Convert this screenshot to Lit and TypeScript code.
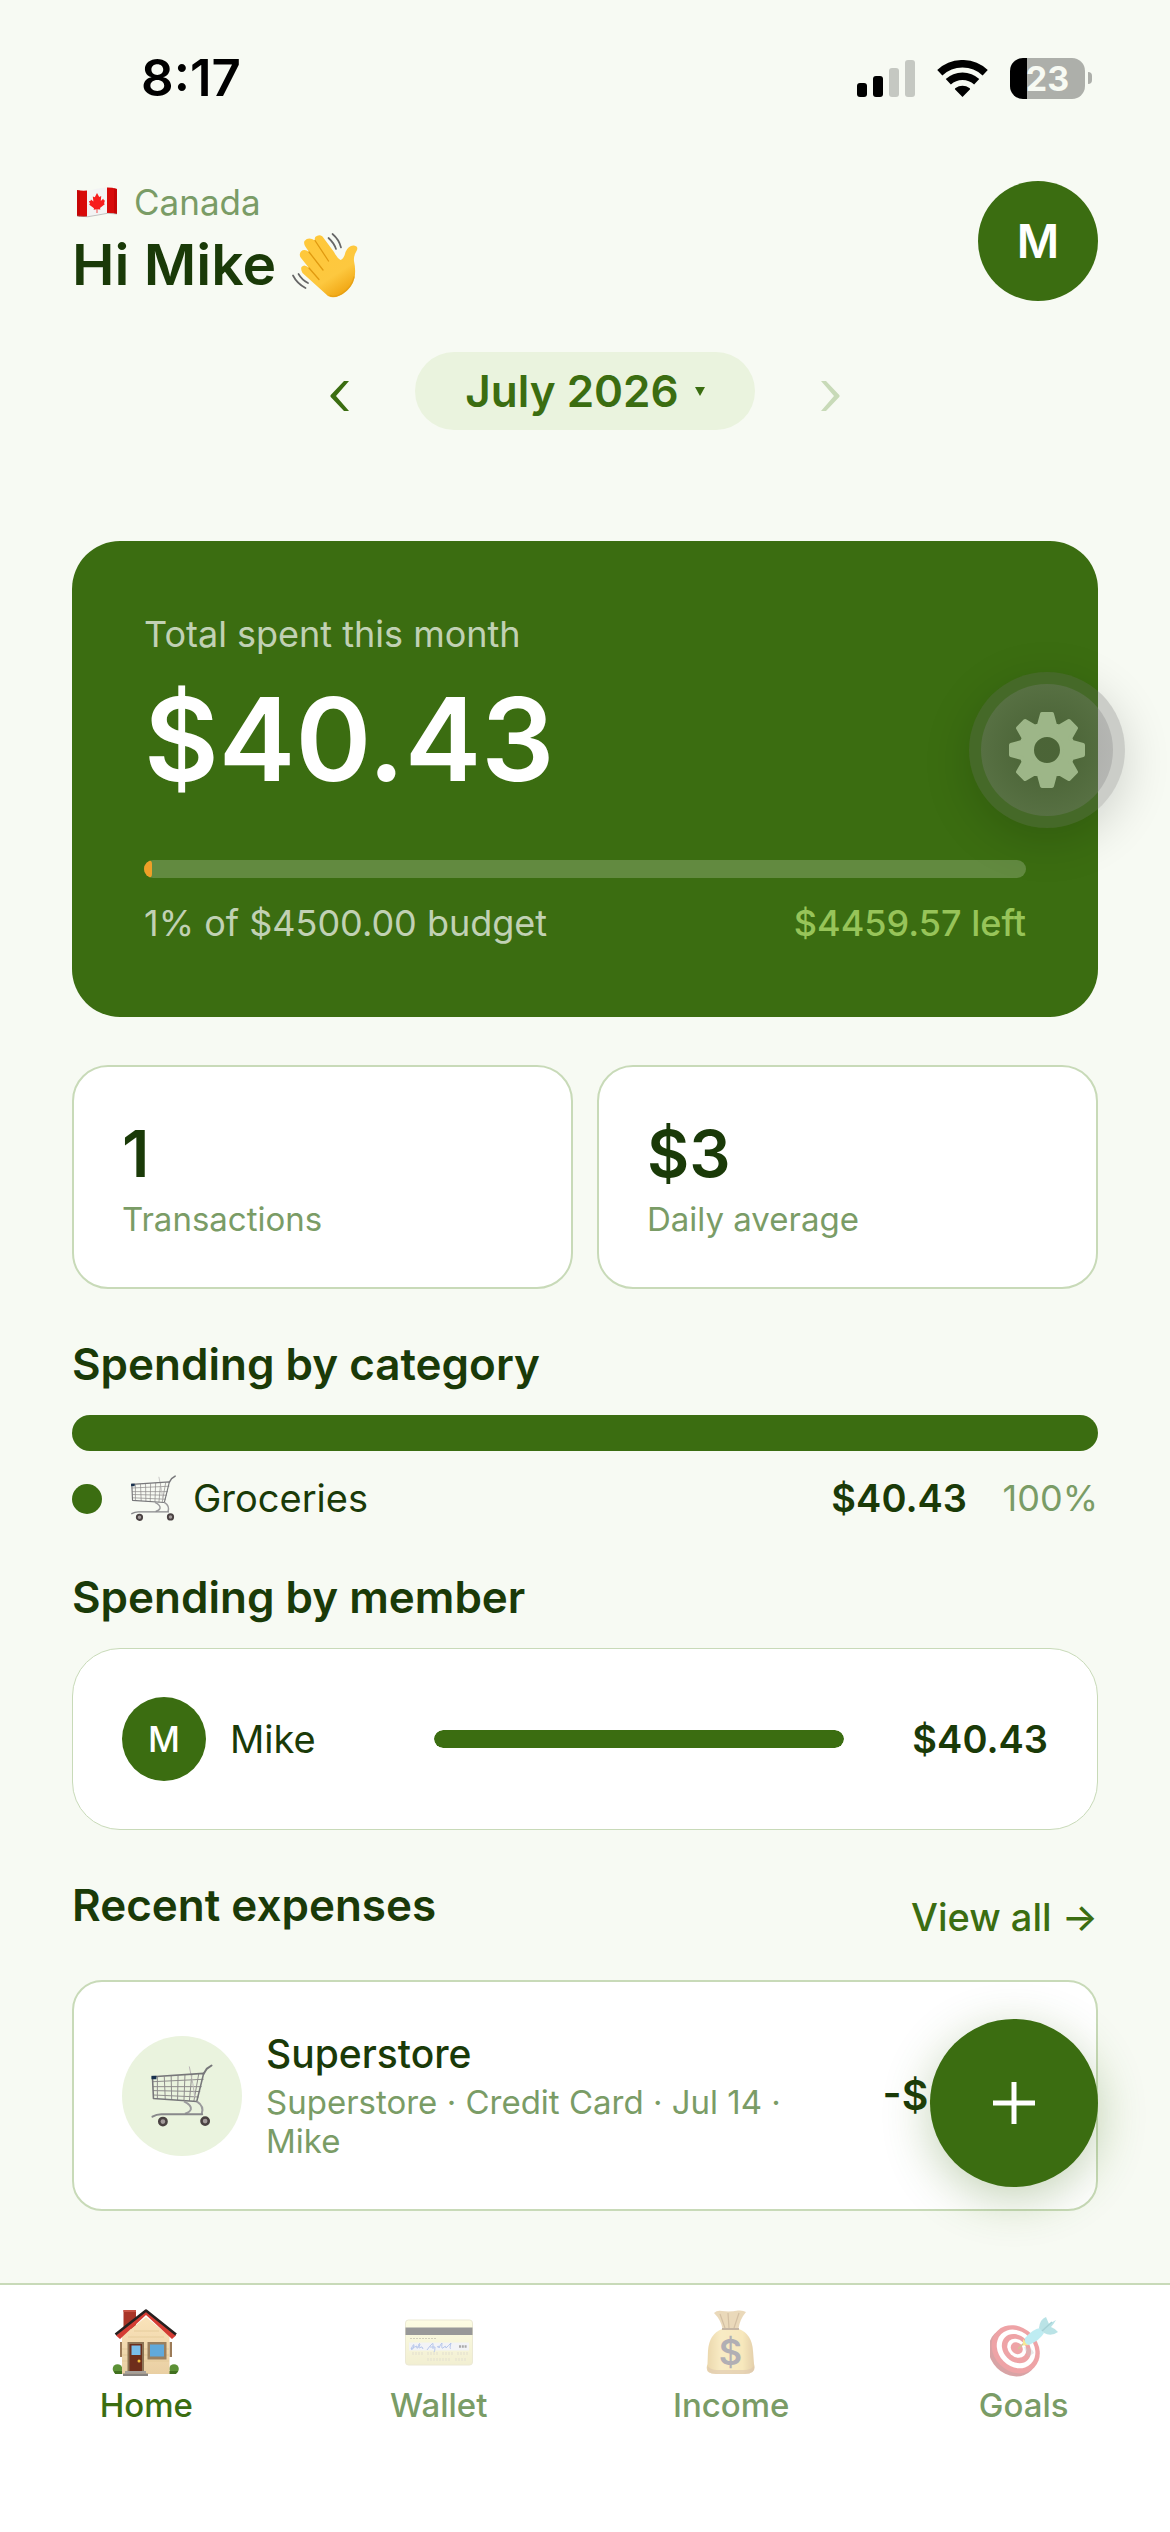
import { LitElement, html, css, svg } from "lit";
import { customElement, property } from "lit/decorators.js";
import { classMap } from "lit/directives/class-map.js";
import { styleMap } from "lit/directives/style-map.js";

// --- Types ---

interface Category {
  name: string;
  amount: number;
  percent: number;
}

interface Member {
  name: string;
  amount: number;
  share: number;
}

interface Expense {
  title: string;
  details: string[];
  amount: number;
}

// --- Data ---

const BUDGET = 4500;
const SPENT = 40.43;

const CATEGORIES: Category[] = [{ name: "Groceries", amount: 40.43, percent: 100 }];

const MEMBERS: Member[] = [{ name: "Mike", amount: 40.43, share: 100 }];

const EXPENSES: Expense[] = [
  { title: "Superstore", details: ["Superstore", "Credit Card", "Jul 14", "Mike"], amount: 40.43 },
];

// --- Pure helpers ---

function money(value: number, digits = 2): string {
  return `$${value.toFixed(digits)}`;
}

/** Outline of an eight-toothed gear around the origin. */
function gearPath(): string {
  const tooth = [
    [-8, -25],
    [-5, -36],
    [5, -36],
    [8, -25],
  ];
  const points: string[] = [];
  for (let i = 0; i < 8; i++) {
    const a = (i * Math.PI) / 4;
    for (const [x, y] of tooth) {
      const px = x * Math.cos(a) - y * Math.sin(a);
      const py = x * Math.sin(a) + y * Math.cos(a);
      points.push(`${px.toFixed(2)} ${py.toFixed(2)}`);
    }
  }
  return `M${points.join("L")}Z M15 0A15 15 0 1 0 -15 0A15 15 0 1 0 15 0Z`;
}

// --- Icons ---

const SIGNAL_ICON = html`<svg width="58" height="37" viewBox="0 0 58 37" aria-hidden="true">
  <rect x="0" y="23" width="10" height="14" rx="3" />
  <rect x="16" y="16" width="10" height="21" rx="3" />
  <rect x="32" y="8" width="10" height="29" rx="3" fill="#c5c8c2" />
  <rect x="48" y="0" width="10" height="37" rx="3" fill="#c5c8c2" />
</svg>`;

const WIFI_ICON = html`<svg width="51" height="37" viewBox="0 0 51 37" aria-hidden="true">
  <g fill="none" stroke="#000" stroke-width="7.5">
    <path d="M2.8 12.7A33.2 33.2 0 0 1 48.2 12.7" />
    <path d="M11.3 21.8A20.7 20.7 0 0 1 39.7 21.8" />
  </g>
  <path d="M25.5 37L17.9 29.2Q17.8 28.4 18.6 28A11.5 11.5 0 0 1 32.4 28Q33.2 28.4 33.1 29.2Z" />
</svg>`;

const FLAG_ICON = html`<svg width="42" height="32" viewBox="0 0 42 32" role="img" aria-label="Flag of Canada">
  <path d="M1 4Q11 6 20 3T41 3V28Q32 26 22 29T1 30Z" fill="#f3f3f3" />
  <path d="M1 4Q6 5 11 4.500V30.500Q6 31 1 30Z" fill="#d80a0a" />
  <path d="M31 1.600Q36 1.500 41 3V28Q36 26.500 31 27Z" fill="#d80a0a" />
  <path d="M1 4Q2.500 4.500 4 4.500V30.600L1 30Z M38 2L41 3V28L38 27.200Z" fill="#b30000" opacity="0.5" />
  <path d="M1 30Q12 32 22 29T41 28" fill="none" stroke="#8a8a8a" stroke-width="0.800" opacity="0.600" />
  <path
    d="M21 7L23.200 11L25.200 10L24.800 15L27.200 12.800L28 14.400L29 14.200L28 17.400L29 18L24 22L24.400 23.600L21.400 23.200V27H20.600V23.200L17.600 23.800L18 22.200L13 18.600L14 18L13 15L14.400 15L15 13.400L17.400 15.400L16.800 10.400L18.800 11.200Z"
    fill="#f71c1c"
  />
</svg>`;

const WAVE_ICON = html`<svg width="66" height="66" viewBox="0 0 66 66" role="img" aria-label="Waving hand">
  <defs>
    <linearGradient id="skin" x1="0.2" y1="0" x2="0.8" y2="1">
      <stop offset="0" stop-color="#ffc83a" />
      <stop offset="0.65" stop-color="#fdc83f" />
      <stop offset="1" stop-color="#ee9f0a" />
    </linearGradient>
  </defs>
  <path
    d="M36 64Q42 67 50 62.500Q60 56 62.500 46Q64 38 62 29Q61.500 24 64.500 19Q67 14.500 62 13.500Q56.500 13 53.500 20Q52 27 48.500 28Q45 26 42 20L30.500 4.500Q27 1.800 23.500 4.800Q22.300 6.500 23 8.500L20 7Q15.500 5.500 12.500 9Q11.500 11 13 14L17 20Q12.500 16.500 9 19.500Q6.500 22.500 9 26L17 36Q12.500 31.500 9.500 35Q8.500 37.500 10.500 41Z"
    fill="url(#skin)"
  />
  <g fill="none" stroke="#e09a10" stroke-width="1.300" stroke-linecap="round">
    <path d="M23 8.500L36.500 29" />
    <path d="M17 20L31 38" />
    <path d="M17 36L27 47.500" />
    <path d="M38 63.500Q44 66 51 61Q60 55 62 45" opacity="0.600" />
  </g>
  <g fill="none" stroke="#666" stroke-width="1.700" stroke-linecap="round">
    <path d="M40.500 2Q47 7.500 49 15.500" />
    <path d="M36.500 6Q42 11 44 17" />
    <path d="M1 43.500Q5 51.500 13.500 56" />
    <path d="M6.500 42Q10 48 16 51" />
  </g>
</svg>`;

const CHEVRON_LEFT = html`<svg width="19" height="30" viewBox="0 0 19 30" fill="currentColor" aria-hidden="true">
  <path d="M14 0H19L6 15L19 30H14L0.500 15.800V14.200Z" />
</svg>`;

const CHEVRON_RIGHT = html`<svg width="19" height="30" viewBox="0 0 19 30" fill="currentColor" aria-hidden="true">
  <path d="M5 0H0L13 15L0 30H5L18.500 15.800V14.200Z" />
</svg>`;

const CARET_ICON = html`<svg width="10" height="9" viewBox="0 0 10 9" fill="currentColor" aria-hidden="true">
  <path d="M0 0H10L5 9Z" />
</svg>`;

const PLUS_ICON = html`<svg width="42" height="42" viewBox="0 0 42 42" fill="currentColor" aria-hidden="true">
  <path d="M18.500 0H23.500V18.500H42V23.500H23.500V42H18.500V23.500H0V18.500H18.500Z" />
</svg>`;

const GEAR_ICON = html`<svg width="78" height="78" viewBox="-39 -39 78 78" aria-hidden="true">
  <path
    d=${gearPath()}
    fill="#9db688"
    fill-rule="evenodd"
    stroke="#9db688"
    stroke-width="4"
    stroke-linejoin="round"
  />
</svg>`;

const cartIcon = (size: number) => html`<svg
  width=${size}
  height=${size}
  viewBox="-1 -1 64 65"
  role="img"
  aria-label="Shopping cart"
>
  <g fill="none" stroke="#8d8b8b" stroke-width="1">
    <path d="M6 12V34M13 11.600L14 35M20 11L20.500 35.500M27 10.600L26.500 35.800M34 10L33 36M41 9.500L38.500 36.500M48 9L43 37" />
    <path d="M1 17L53 14.500M1.500 22H51M1.500 26L49.500 27M2 30.500L48 32.500" />
    <path d="M38.400 1.500L42 19L44 33" stroke="#b9b5b5" />
  </g>
  <g fill="none" stroke="#77777a" stroke-width="1.600" stroke-linejoin="round">
    <path d="M1 12L53 8.500L46 37L2 34Z" />
    <path d="M53 9L56 4L61 0.500" stroke-width="2" stroke-linecap="round" />
  </g>
  <path d="M33 37Q41 41 40 45Q39 48 34 49.500M46 37Q54 42 51 50" fill="none" stroke="#9a9a9c" stroke-width="2" />
  <path d="M1 52.500Q5 50 10 50H51.500" fill="none" stroke="#88888b" stroke-width="2" stroke-linecap="round" />
  <path d="M0 11H5V14.500H0Z" fill="#17304d" />
  <g fill="#a39b9b" stroke="#4a4242" stroke-width="2.600">
    <circle cx="11.600" cy="57.500" r="3.700" />
    <circle cx="54.500" cy="57" r="3.700" />
  </g>
</svg>`;

const HOME_ICON = svg`
  <defs>
    <linearGradient id="wall" x1="0" y1="0" x2="0" y2="1">
      <stop offset="0" stop-color="#fae3ba" />
      <stop offset="1" stop-color="#e9cfa3" />
    </linearGradient>
  </defs>
  <circle cx="5.500" cy="60" r="4.800" fill="#5c9136" />
  <circle cx="62" cy="60" r="4.800" fill="#5c9136" />
  <path d="M2 62H10V65H3ZM57 62H66L64 65H57Z" fill="#41701f" />
  <path d="M11.500 1H24V20H11.500Z" fill="#a93527" />
  <path d="M11.500 1H24V3H11.500Z" fill="#c85243" />
  <path d="M8 33H10V48H8ZM57.500 33H60V48H57.500Z" fill="#9c7b58" />
  <path d="M34 8L57.500 27V65H10V27Z" fill="url(#wall)" />
  <path d="M10 40H57M10 46H57M10 52H57M22 22H47M16 28H52" stroke="#e0c594" stroke-width="0.700" />
  <path d="M34 6L60 30L64 26.500L34 1L4 26.500L8 30Z" fill="#d43c33" />
  <path d="M3.500 25.500L34 1.500L64 25.500" fill="none" stroke="#26201f" stroke-width="2.600" stroke-linejoin="round" />
  <path d="M15.500 33H32V62.500H15.500Z" fill="#8c7355" />
  <path d="M17.500 35H30V62.500H17.500Z" fill="#6e2e1b" />
  <path d="M19.500 36.500H28.500V46H19.500Z" fill="#79bde9" />
  <circle cx="27" cy="52" r="1.500" fill="#f2c03c" />
  <path d="M35.500 33H54.500V50.500H35.500Z" fill="#9a7f5e" />
  <path d="M38 35.500H52V47.500H38Z" fill="#61a9da" />
  <path d="M13 62H34V64.500H13Z" fill="#a5a09b" />
  <path d="M11 64.500H36V67H11Z" fill="#85817e" />`;

const WALLET_ICON = svg`
  <defs>
    <linearGradient id="plastic" x1="0" y1="0" x2="0" y2="1">
      <stop offset="0" stop-color="#fbfbc8" />
      <stop offset="1" stop-color="#e6e0a6" />
    </linearGradient>
  </defs>
  <rect x="0.500" y="11" width="67" height="45" rx="3" fill="url(#plastic)" stroke="#d9d4ad" />
  <path d="M0.500 18.500H67.500V26H0.500Z" fill="#333" />
  <path d="M5 29.500H32" stroke="#a8a47e" stroke-width="1.200" stroke-dasharray="2 1" />
  <path d="M4 33.500H64V41.500H4Z" fill="#e6e9ef" />
  <path
    d="M6 40Q9 34 9 36Q8 42 6 40Q9 38 12 37Q11 40 13 39Q14 33 15 35Q13 41 16 38Q17 37 18 40M22 41Q27 34 28 34.500L28 40M25 38H30Q30 42 29 43M32 38Q34 36 34 39Q36 34 37 34Q36 42 39 38Q41 36 41 39Q44 36 46 34Q44 41 46 39"
    fill="none" stroke="#6f8fd8" stroke-width="1"
  />
  <path d="M54 37.500H62" stroke="#555" stroke-width="2.400" stroke-dasharray="2 0.800" />
  <path d="M7 44.500H18M22 44.500H33M37 44.500H48M52 44.500H63M22 50.500H46M50 50.500H62" stroke="#d8d2a6" stroke-width="3" stroke-dasharray="2 1" />`;

const INCOME_ICON = svg`
  <defs>
    <linearGradient id="sack" x1="0" y1="0" x2="1" y2="0">
      <stop offset="0" stop-color="#d8b05c" />
      <stop offset="0.300" stop-color="#f3d98b" />
      <stop offset="0.750" stop-color="#f0d27c" />
      <stop offset="1" stop-color="#c99f58" />
    </linearGradient>
  </defs>
  <path d="M17 4Q20 1 25 2Q33 3 41 1.500Q46 1 49 3Q43 10 41.500 19.500H25.500Q24 11 17 4Z" fill="#d7b478" />
  <path d="M23 5L28 19M31 4L32 19M42 4L37 19" stroke="#a9824a" stroke-width="1.200" />
  <path d="M25 20H42Q55 25 56 42L57 55Q60 65 48 65H19Q7 65 10.500 55L11 42Q12 25 25 20Z" fill="url(#sack)" />
  <path d="M10.500 57Q14 61 20 61H47Q54 61 57 57Q58 65 48 65H19Q9 65 10.500 57Z" fill="#bd9060" opacity="0.600" />
  <path d="M25 20H42" stroke="#8e7049" stroke-width="2" />
  <text x="33.500" y="56" text-anchor="middle" font-family="Inter, sans-serif" font-size="36" font-weight="600" fill="#66616c">$</text>`;

const GOALS_ICON = svg`
  <g transform="rotate(45 25 41)">
    <ellipse cx="25" cy="44" rx="26" ry="22.500" fill="#b34a4d" />
    <ellipse cx="25" cy="40" rx="26" ry="22" fill="#de4a50" />
    <ellipse cx="25" cy="39.500" rx="21" ry="17.500" fill="#fff" />
    <ellipse cx="25" cy="39" rx="16" ry="13" fill="#de4a50" />
    <ellipse cx="25" cy="38.500" rx="10.500" ry="8.500" fill="#fff" />
    <ellipse cx="25" cy="38.500" rx="6.500" ry="5.500" fill="#de4a50" />
  </g>
  <path d="M34 38Q42 38 44 44L38 48Z" fill="#888" opacity="0.350" />
  <path d="M28 40L35 33" stroke="#a28c2b" stroke-width="1.500" />
  <path d="M33 30L39 36L33 36.500Z" fill="#f0d12e" />
  <path d="M35 29Q43 20 50 19L54 24Q50 31 39 36Q34 35 35 29Z" fill="#7fdbe6" />
  <path d="M49 19Q50 10 56 8L59 15L66 11Q63 16 61 18Q66 20 68 23Q61 28 54 24Z" fill="#78c8cf" />
  <path d="M52 22L62 13" stroke="#4ea5ae" stroke-width="1.500" />`;

const NAV_ITEMS = [
  { label: "Home", icon: HOME_ICON, active: true },
  { label: "Wallet", icon: WALLET_ICON, active: false },
  { label: "Income", icon: INCOME_ICON, active: false },
  { label: "Goals", icon: GOALS_ICON, active: false },
];

// --- Components ---

/** Phone status bar with the clock, signal, wifi and battery. */
@customElement("status-bar")
export class StatusBarElement extends LitElement {
  static styles = css`
    :host {
      display: flex;
      justify-content: space-between;
      align-items: center;
      height: 141px;
      box-sizing: border-box;
      padding: 15px 78px 0 141px;
      color: #000;
    }

    .time {
      font-size: 51px;
      font-weight: 600;
      line-height: 60px;
    }

    .icons {
      display: flex;
      align-items: center;
      gap: 22px;
    }

    .battery {
      display: flex;
      align-items: center;
      gap: 3px;
    }

    .level {
      width: 75px;
      border-radius: 13px;
      color: #f7faf3;
      font-size: 34px;
      font-weight: 700;
      line-height: 41px;
      text-align: center;
    }

    .tip {
      width: 4px;
      height: 12px;
      border-radius: 0 6px 6px 0;
      background: #adafaa;
    }

    svg {
      display: block;
    }
  `;

  @property() time = "8:17";
  @property({ type: Number }) battery = 23;

  render() {
    const fill = `linear-gradient(to right, #000 ${this.battery}%, #adafaa ${this.battery}%)`;
    return html`
      <span class="time">${this.time}</span>
      <div class="icons">
        ${SIGNAL_ICON} ${WIFI_ICON}
        <div class="battery">
          <span class="level" style=${styleMap({ background: fill })}>${this.battery}</span>
          <span class="tip"></span>
        </div>
      </div>
    `;
  }
}

/** Bottom tab bar. */
@customElement("tab-bar")
export class TabBarElement extends LitElement {
  static styles = css`
    :host {
      display: block;
    }

    nav {
      display: grid;
      grid-template-columns: repeat(4, 1fr);
      padding: 24px 0 107px;
      border-top: 2px solid #c8dab8;
      background: #fff;
    }

    a {
      display: flex;
      flex-direction: column;
      align-items: center;
      gap: 8px;
      color: #7a9c66;
      font-size: 33px;
      font-weight: 500;
      line-height: 40px;
      text-decoration: none;
    }

    a svg {
      display: block;
      opacity: 0.5;
    }

    a.active {
      color: #3b6d11;
    }

    a.active svg {
      opacity: 1;
    }
  `;

  render() {
    return html`
      <nav>
        ${NAV_ITEMS.map(
          (item) => html`
            <a href="#${item.label.toLowerCase()}" class=${classMap({ active: item.active })}>
              <svg width="68" height="68" viewBox="0 0 68 68" aria-hidden="true">${item.icon}</svg>
              ${item.label}
            </a>
          `,
        )}
      </nav>
    `;
  }
}

@customElement("app-root")
export class AppRootElement extends LitElement {
  static styles = css`
    :host {
      position: relative;
      display: flex;
      flex-direction: column;
      min-height: 100vh;
      overflow: hidden;
      background: #f7faf3;
      color: #1a3a08;
      font-family: Inter, "Noto Sans", sans-serif;
    }

    h1,
    h2,
    p {
      margin: 0;
    }

    button {
      padding: 0;
      border: none;
      background: none;
      color: inherit;
      font: inherit;
      cursor: pointer;
    }

    svg {
      display: block;
      flex: none;
    }

    main {
      flex: 1;
      padding: 40px 72px 48px;
    }

    .header {
      display: flex;
      justify-content: space-between;
      align-items: center;
    }

    .country {
      display: flex;
      align-items: center;
      gap: 16px;
      padding-left: 4px;
      color: #7a9c66;
      font-size: 35px;
      line-height: 42px;
    }

    h1 {
      display: flex;
      align-items: center;
      gap: 16px;
      margin-top: 6px;
      font-size: 57px;
      font-weight: 600;
      line-height: 72px;
    }

    .avatar {
      display: flex;
      flex: none;
      align-items: center;
      justify-content: center;
      width: 120px;
      height: 120px;
      border-radius: 50%;
      background: #3b6d11;
      color: #fff;
      font-size: 46px;
      font-weight: 600;
    }

    .avatar.small {
      width: 84px;
      height: 84px;
      font-size: 35px;
      font-weight: 500;
    }

    .months {
      display: flex;
      justify-content: center;
      align-items: center;
      gap: 66px;
      margin: 51px 0 111px;
      color: #3b6d11;
    }

    .step {
      padding-top: 10px;
    }

    .step:disabled {
      color: #c8dab8;
    }

    .month {
      display: flex;
      align-items: center;
      gap: 16px;
      padding: 0 50px;
      border-radius: 39px;
      background: #eaf3de;
      font-size: 44px;
      font-weight: 600;
      line-height: 78px;
    }

    .hero {
      padding: 72px;
      border-radius: 48px;
      background: #3b6d11;
      color: #fff;
    }

    .hero p,
    .budget {
      color: rgba(255, 255, 255, 0.7);
      font-size: 36px;
      line-height: 43px;
    }

    .hero .total {
      margin-top: 12px;
      color: #fff;
      font-size: 115px;
      font-weight: 600;
      line-height: 144px;
    }

    .track {
      height: 18px;
      border-radius: 9px;
      overflow: hidden;
    }

    .fill {
      height: 100%;
      background: #3b6d11;
    }

    .hero .track {
      margin: 48px 0 24px;
      background: rgba(255, 255, 255, 0.2);
    }

    .hero .fill {
      border-radius: 9px;
      background: #ef9f27;
    }

    .budget {
      display: flex;
      justify-content: space-between;
    }

    .left {
      color: #97c459;
      font-weight: 500;
    }

    .stats {
      display: grid;
      grid-template-columns: 1fr 1fr;
      gap: 24px;
      margin-top: 48px;
    }

    .card {
      padding: 48px;
      border: 2px solid #c8dab8;
      border-radius: 36px;
      background: #fff;
    }

    .value {
      font-size: 65px;
      font-weight: 600;
      line-height: 78px;
    }

    .label {
      margin-top: 6px;
      color: #7a9c66;
      font-size: 33px;
      line-height: 40px;
    }

    h2 {
      margin: 48px 0 24px;
      font-size: 44px;
      font-weight: 600;
      line-height: 54px;
    }

    .segments {
      display: flex;
      height: 36px;
      border-radius: 18px;
      overflow: hidden;
    }

    .category {
      display: flex;
      align-items: center;
      margin-top: 24px;
      font-size: 38px;
      line-height: 47px;
    }

    .dot {
      width: 30px;
      height: 30px;
      margin-right: 28px;
      border-radius: 50%;
      background: #3b6d11;
    }

    .category .name {
      flex: 1;
      margin-left: 16px;
    }

    .amount {
      font-size: 38px;
      font-weight: 600;
      line-height: 47px;
    }

    .percent {
      width: 131px;
      color: #7a9c66;
      font-size: 36px;
      text-align: right;
    }

    .members {
      padding: 48px 49px;
      border-width: 1px;
      border-radius: 48px;
    }

    .member {
      display: flex;
      align-items: center;
      gap: 24px;
      font-size: 38px;
      line-height: 47px;
    }

    .member .name {
      width: 180px;
    }

    .member .track {
      flex: 1;
    }

    .member .fill {
      border-radius: 9px;
    }

    .member .amount {
      width: 180px;
      text-align: right;
    }

    .heading {
      display: flex;
      justify-content: space-between;
      align-items: center;
      margin: 48px 0 24px;
    }

    .heading h2 {
      margin-top: 0;
    }

    .heading a {
      color: #3b6d11;
      font-size: 38px;
      font-weight: 500;
      line-height: 47px;
      text-decoration: none;
    }

    .expense {
      display: flex;
      align-items: center;
      gap: 24px;
      border-radius: 30px;
    }

    .expense .amount {
      margin-left: 24px;
      font-size: 41px;
    }

    .bubble {
      display: flex;
      flex: none;
      align-items: center;
      justify-content: center;
      width: 120px;
      height: 120px;
      border-radius: 50%;
      background: #eaf3de;
    }

    .info {
      flex: 1;
      min-width: 0;
    }

    .title {
      font-size: 39px;
      font-weight: 500;
      line-height: 47px;
    }

    .details {
      margin-top: 6px;
      color: #7a9c66;
      font-size: 33px;
      line-height: 39px;
    }

    .settings {
      position: absolute;
      top: 672px;
      right: 45px;
      display: flex;
      align-items: center;
      justify-content: center;
      width: 156px;
      height: 156px;
      border-radius: 50%;
      background: rgba(97, 97, 97, 0.29);
      box-shadow: 0 12px 48px rgba(0, 0, 0, 0.16);
    }

    .disc {
      display: flex;
      align-items: center;
      justify-content: center;
      width: 132px;
      height: 132px;
      border-radius: 50%;
      background: radial-gradient(rgba(90, 90, 90, 0.3) 20%, rgba(128, 128, 128, 0.3) 70%);
    }

    .add {
      position: absolute;
      right: 72px;
      bottom: 345px;
      display: flex;
      align-items: center;
      justify-content: center;
      width: 168px;
      height: 168px;
      border-radius: 50%;
      background: #3b6d11;
      box-shadow: 0 12px 48px rgba(59, 109, 17, 0.3);
      color: #fff;
    }
  `;

  private renderHero() {
    const percent = (SPENT / BUDGET) * 100;
    return html`
      <section class="hero">
        <p>Total spent this month</p>
        <div class="total">${money(SPENT)}</div>
        <div class="track">
          <div class="fill" style=${styleMap({ width: `${percent}%` })}></div>
        </div>
        <div class="budget">
          <span>${Math.round(percent)}% of ${money(BUDGET)} budget</span>
          <span class="left">${money(BUDGET - SPENT)} left</span>
        </div>
      </section>
    `;
  }

  private renderCategories() {
    return html`
      <h2>Spending by category</h2>
      <div class="segments">
        ${CATEGORIES.map(
          (c) => html`<div class="fill" style=${styleMap({ width: `${c.percent}%` })}></div>`,
        )}
      </div>
      ${CATEGORIES.map(
        (c) => html`
          <div class="category">
            <span class="dot"></span>
            ${cartIcon(47)}
            <span class="name">${c.name}</span>
            <span class="amount">${money(c.amount)}</span>
            <span class="percent">${c.percent}%</span>
          </div>
        `,
      )}
    `;
  }

  private renderMembers() {
    return html`
      <h2>Spending by member</h2>
      <div class="card members">
        ${MEMBERS.map(
          (m) => html`
            <div class="member">
              <span class="avatar small">${m.name[0]}</span>
              <span class="name">${m.name}</span>
              <div class="track">
                <div class="fill" style=${styleMap({ width: `${m.share}%` })}></div>
              </div>
              <span class="amount">${money(m.amount)}</span>
            </div>
          `,
        )}
      </div>
    `;
  }

  private renderExpenses() {
    return html`
      <div class="heading">
        <h2>Recent expenses</h2>
        <a href="#expenses">View all →</a>
      </div>
      ${EXPENSES.map(
        (e) => html`
          <div class="card expense">
            <span class="bubble">${cartIcon(64)}</span>
            <div class="info">
              <div class="title">${e.title}</div>
              <div class="details">${e.details.join(" · ")}</div>
            </div>
            <span class="amount">-${money(e.amount)}</span>
          </div>
        `,
      )}
    `;
  }

  render() {
    return html`
      <status-bar></status-bar>
      <main>
        <header class="header">
          <div>
            <div class="country">${FLAG_ICON} Canada</div>
            <h1>Hi Mike ${WAVE_ICON}</h1>
          </div>
          <button class="avatar" aria-label="Profile">M</button>
        </header>

        <div class="months">
          <button class="step" aria-label="Previous month">${CHEVRON_LEFT}</button>
          <button class="month">July 2026 ${CARET_ICON}</button>
          <button class="step" aria-label="Next month" disabled>${CHEVRON_RIGHT}</button>
        </div>

        ${this.renderHero()}

        <div class="stats">
          <div class="card">
            <div class="value">1</div>
            <div class="label">Transactions</div>
          </div>
          <div class="card">
            <div class="value">${money(3, 0)}</div>
            <div class="label">Daily average</div>
          </div>
        </div>

        ${this.renderCategories()} ${this.renderMembers()} ${this.renderExpenses()}
      </main>
      <tab-bar></tab-bar>

      <button class="settings" aria-label="Settings"><span class="disc">${GEAR_ICON}</span></button>
      <button class="add" aria-label="Add expense">${PLUS_ICON}</button>
    `;
  }
}
